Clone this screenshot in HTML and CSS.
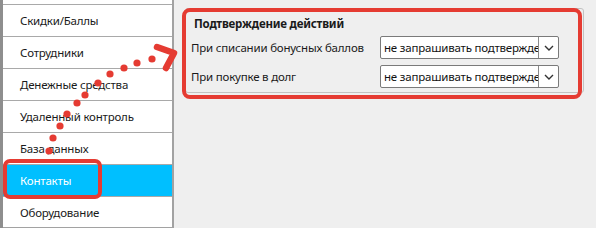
FILE: index.html
```html
<!DOCTYPE html>
<html lang="ru">
<head>
<meta charset="utf-8">
<link rel="stylesheet" href="styles.css">
</head>
<body>
<div class="app">
  <div class="strip"></div>
  <ul class="menu">
    <li class="item stub"></li>
    <li class="item">Скидки/Баллы</li>
    <li class="item">Сотрудники</li>
    <li class="item">Денежные средства</li>
    <li class="item">Удаленный контроль</li>
    <li class="item">База данных</li>
    <li class="item active">Контакты</li>
    <li class="item">Оборудование</li>
  </ul>
  <div class="pane">
    <fieldset class="group">
      <div class="group-title">Подтверждение действий</div>
      <div class="row">
        <span class="label">При списании бонусных баллов</span>
        <div class="select"><span class="value">не запрашивать подтверждение</span><span class="drop"><svg width="10" height="6" viewBox="0 0 10 6"><path d="M1 1 L5 5 L9 1" fill="none" stroke="#333" stroke-width="1.4"/></svg></span></div>
      </div>
      <div class="row">
        <span class="label">При покупке в долг</span>
        <div class="select"><span class="value">не запрашивать подтверждение</span><span class="drop"><svg width="10" height="6" viewBox="0 0 10 6"><path d="M1 1 L5 5 L9 1" fill="none" stroke="#333" stroke-width="1.4"/></svg></span></div>
      </div>
    </fieldset>
  </div>
</div>
<div class="mark mark-group"></div>
<div class="mark mark-item"></div>
<svg class="arrow" width="596" height="228" viewBox="0 0 596 228">
  <g fill="#e53b32">
    <circle cx="49" cy="151" r="3.6"/>
    <circle cx="53" cy="138" r="3.6"/>
    <circle cx="60" cy="126" r="3.6"/>
    <circle cx="67" cy="114" r="3.6"/>
    <circle cx="77" cy="103" r="3.6"/>
    <circle cx="85" cy="95" r="3.6"/>
    <circle cx="98" cy="83" r="3.6"/>
    <circle cx="110" cy="74" r="3.6"/>
    <circle cx="124" cy="68" r="3.6"/>
    <circle cx="137" cy="63" r="3.6"/>
    <circle cx="152" cy="59" r="3.6"/>
  </g>
  <path d="M157 47 L174 53 L166 68" fill="none" stroke="#e53b32" stroke-width="6.5" stroke-linecap="round" stroke-linejoin="round"/>
</svg>
</body>
</html>
```
FILE: styles.css
```css
* { box-sizing: border-box; }
html, body { margin: 0; padding: 0; }
body {
  width: 596px;
  height: 228px;
  overflow: hidden;
  background: #efefef;
  font-family: "Noto Sans", "Open Sans", sans-serif;
  font-size: 11.5px;
  letter-spacing: -0.2px;
  color: #1a1a1a;
  position: relative;
}
.app {
  display: flex;
  height: 228px;
}
.strip {
  width: 3px;
  background: #8e8e8e;
  flex: none;
}
.menu {
  list-style: none;
  margin: 0;
  padding: 0;
  width: 171px;
  flex: none;
  height: 228px;
  background: #fff;
  border-right: 2px solid #a2a2a2;
  border-bottom: 1px solid #a2a2a2;
  overflow: hidden;
}
.item {
  height: 32px;
  line-height: 31px;
  border-top: 1px solid #a9a9a9;
  padding-left: 17px;
  white-space: nowrap;
}
.item.stub {
  height: 4px;
  border-top: none;
}
.item.active {
  background: #00bfff;
  color: #fff;
}
.pane {
  flex: 1;
  padding: 8px 12px 0 11px;
}
.group {
  margin: 0;
  padding: 5px 0 3px 5px;
  border: 1px solid #c2c2c2;
  border-radius: 3px;
  height: 85px;
}
.group-title {
  font-weight: bold;
  padding-left: 3px;
  height: 22px;
  line-height: 19px;
}
.row {
  display: flex;
  align-items: center;
  height: 23px;
  margin-bottom: 6px;
}
.label {
  width: 189px;
  flex: none;
}
.select {
  display: flex;
  width: 179px;
  height: 23px;
  background: #fff;
  border: 1px solid #7a7a7a;
  border-radius: 2px;
  overflow: hidden;
}
.value {
  flex: 1;
  overflow: hidden;
  white-space: nowrap;
  padding-left: 3px;
  line-height: 21px;
  color: #111;
}
.drop {
  width: 20px;
  flex: none;
  border-left: 1px solid #8a8a8a;
  display: flex;
  align-items: center;
  justify-content: center;
}
.mark {
  position: absolute;
  border: 4.5px solid #e53b32;
  border-radius: 8px;
}
.mark-group {
  left: 182px;
  top: 8px;
  width: 400px;
  height: 91px;
}
.mark-item {
  left: 3px;
  top: 159px;
  width: 99px;
  height: 40px;
  border-radius: 7px;
}
.arrow {
  position: absolute;
  left: 0;
  top: 0;
}
```
